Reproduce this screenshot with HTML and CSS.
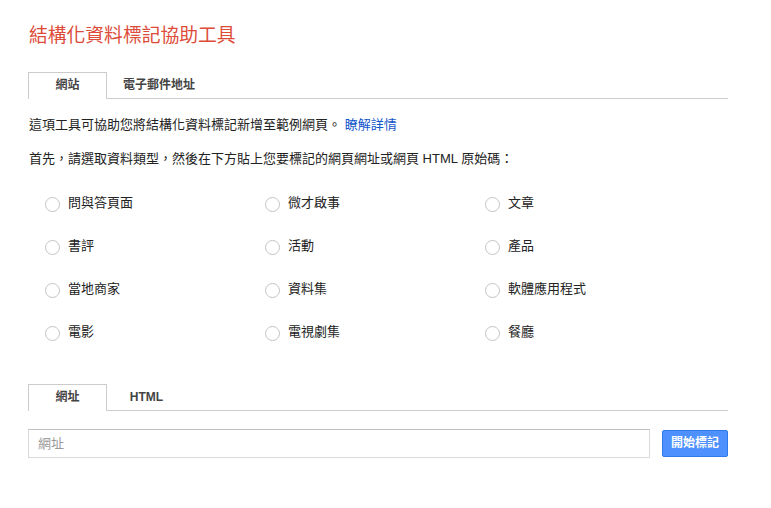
FILE: index.html
```html
<!DOCTYPE html>
<html lang="zh-Hant">
<head>
<meta charset="utf-8">
<title>結構化資料標記協助工具</title>
<link rel="stylesheet" href="styles.css">
</head>
<body>
<div class="page">
  <h1 class="title">結構化資料標記協助工具</h1>

  <div class="tabs tabs-top">
    <div class="tab active">網站</div>
    <div class="tab">電子郵件地址</div>
  </div>

  <p class="intro">這項工具可協助您將結構化資料標記新增至範例網頁。 <a class="link" href="#">瞭解詳情</a></p>
  <p class="lead">首先，請選取資料類型，然後在下方貼上您要標記的網頁網址或網頁 HTML 原始碼：</p>

  <div class="types">
    <label class="opt"><span class="radio"></span><span>問與答頁面</span></label>
    <label class="opt"><span class="radio"></span><span>微才啟事</span></label>
    <label class="opt"><span class="radio"></span><span>文章</span></label>
    <label class="opt"><span class="radio"></span><span>書評</span></label>
    <label class="opt"><span class="radio"></span><span>活動</span></label>
    <label class="opt"><span class="radio"></span><span>產品</span></label>
    <label class="opt"><span class="radio"></span><span>當地商家</span></label>
    <label class="opt"><span class="radio"></span><span>資料集</span></label>
    <label class="opt"><span class="radio"></span><span>軟體應用程式</span></label>
    <label class="opt"><span class="radio"></span><span>電影</span></label>
    <label class="opt"><span class="radio"></span><span>電視劇集</span></label>
    <label class="opt"><span class="radio"></span><span>餐廳</span></label>
  </div>

  <div class="tabs tabs-bottom">
    <div class="tab active">網址</div>
    <div class="tab">HTML</div>
  </div>

  <div class="url-row">
    <div class="url-input">網址</div>
    <div class="btn">開始標記</div>
  </div>
</div>
</body>
</html>
```
FILE: styles.css
```css
* { box-sizing: border-box; }
html, body { margin: 0; padding: 0; background: #fff; }
body {
  font-family: "Liberation Sans", Arial, "Noto Sans CJK TC", sans-serif;
  font-size: 13px;
  color: #222;
}
.page {
  width: 728px;
  padding: 24px 0 0 28px;
}
.title {
  margin: 0 0 0 1px;
  font-size: 18.8px;
  line-height: 24px;
  font-weight: normal;
  color: #dd4b39;
}
.tabs {
  display: flex;
  border-bottom: 1px solid #ccc;
  height: 27px;
}
.tabs-top { margin-top: 24px; }
.tab {
  min-width: 79px;
  padding: 0 15px;
  text-align: center;
  font-size: 12px;
  font-weight: bold;
  color: #444;
  line-height: 25px;
  border: 1px solid transparent;
  border-bottom: none;
}
.tab.active {
  border-color: #ccc;
  background: #fff;
  height: 27px;
  margin-bottom: -1px;
}
.intro {
  margin: 17px 0 0 1px;
  line-height: 18px;
}
.link { color: #15c; text-decoration: none; }
.lead {
  margin: 16px 0 0 1px;
  line-height: 18px;
}
.types {
  display: grid;
  grid-template-columns: 220px 220px 220px;
  grid-auto-rows: 43px;
  margin: 26px 0 0 17px;
}
.opt {
  display: flex;
  align-items: center;
  gap: 8px;
  height: 18px;
  line-height: 18px;
  color: #222;
}
.radio {
  width: 15px;
  height: 15px;
  border: 1px solid #c4c4c4;
  border-radius: 50%;
  margin-top: 2px;
  flex: none;
}
.tabs-bottom { margin-top: 18px; }
.url-row {
  display: flex;
  align-items: center;
  gap: 12px;
  margin-top: 18px;
}
.url-input {
  width: 622px;
  height: 29px;
  border: 1px solid #d9d9d9;
  border-top-color: #c0c0c0;
  padding-left: 9px;
  line-height: 27px;
  color: #999;
}
.btn {
  width: 66px;
  height: 27px;
  background: #4d90fe;
  border: 1px solid #3079ed;
  border-radius: 2px;
  color: #fff;
  font-size: 12px;
  font-weight: bold;
  text-align: center;
  line-height: 25px;
}
```
